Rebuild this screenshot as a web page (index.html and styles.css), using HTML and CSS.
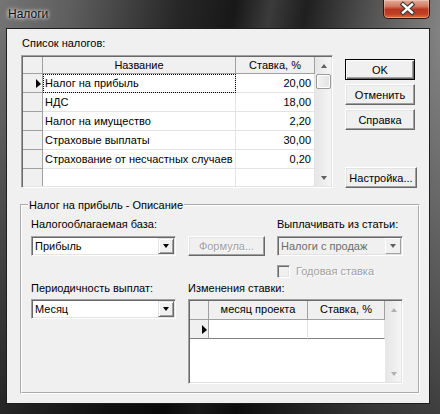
FILE: index.html
```html
<!DOCTYPE html>
<html lang="ru">
<head>
    <meta charset="UTF-8">
    <title>Налоги</title>
    <link rel="stylesheet" href="styles.css">
</head>
<body>

<div class="window">
    <div class="titlebar">
        <span class="title">Налоги</span>
        <div class="close-btn">
            <svg width="47" height="18" viewBox="0 0 47 18">
                <path d="M19 4.5 L28 12.5 M28 4.5 L19 12.5" stroke="#3a3a3a" stroke-width="4.6" stroke-linecap="square"/>
                <path d="M19 4.5 L28 12.5 M28 4.5 L19 12.5" stroke="#ffffff" stroke-width="2.4" stroke-linecap="square"/>
            </svg>
        </div>
    </div>

    <div class="client">
        <div class="top-section">
            <div class="list-col">
                <div class="caption">Список налогов:</div>
                <div class="grid tax-grid">
                    <div class="cells tax-cells">
                        <div class="hd ind"></div>
                        <div class="hd center">Название</div>
                        <div class="hd center">Ставка, %</div>

                        <div class="ind"><span class="ptr"></span></div>
                        <div class="cell focus">Налог на прибыль</div>
                        <div class="cell num">20,00</div>

                        <div class="ind"></div>
                        <div class="cell">НДС</div>
                        <div class="cell num">18,00</div>

                        <div class="ind"></div>
                        <div class="cell">Налог на имущество</div>
                        <div class="cell num">2,20</div>

                        <div class="ind"></div>
                        <div class="cell">Страховые выплаты</div>
                        <div class="cell num">30,00</div>

                        <div class="ind"></div>
                        <div class="cell">Страхование от несчастных случаев</div>
                        <div class="cell num">0,20</div>

                        <div class="ind"></div>
                        <div class="cell"></div>
                        <div class="cell"></div>
                    </div>
                    <div class="vscroll">
                        <div class="sb-arrow"><span class="glyph up"></span></div>
                        <div class="sb-thumb"></div>
                        <div class="sb-track"></div>
                        <div class="sb-arrow"><span class="glyph down"></span></div>
                    </div>
                </div>
            </div>

            <div class="buttons">
                <button class="btn btn-default">OK</button>
                <button class="btn">Отменить</button>
                <button class="btn">Справка</button>
                <button class="btn btn-setup">Настройка...</button>
            </div>
        </div>

        <fieldset class="group">
            <legend>Налог на прибыль - Описание</legend>
            <div class="group-body">
                <div class="lbl">Налогооблагаемая база:</div>
                <div></div>
                <div class="lbl">Выплачивать из статьи:</div>

                <div class="combo">
                    <span class="combo-text">Прибыль</span>
                    <span class="combo-btn"><span class="glyph down dark"></span></span>
                </div>
                <button class="btn btn-formula" disabled>Формула...</button>
                <div class="combo combo-disabled">
                    <span class="combo-text">Налоги с продаж</span>
                    <span class="combo-btn"><span class="glyph down"></span></span>
                </div>

                <div></div>
                <div></div>
                <div class="check">
                    <span class="check-box"></span>
                    <span class="check-text">Годовая ставка</span>
                </div>

                <div class="lbl">Периодичность выплат:</div>
                <div class="lbl span-2">Изменения ставки:</div>

                <div class="combo combo-month">
                    <span class="combo-text">Месяц</span>
                    <span class="combo-btn"><span class="glyph down dark"></span></span>
                </div>
                <div class="grid rate-grid span-2">
                    <div class="cells rate-cells">
                        <div class="hd ind"></div>
                        <div class="hd center">месяц проекта</div>
                        <div class="hd center">Ставка, %</div>

                        <div class="ind last"><span class="ptr"></span></div>
                        <div class="cell last"></div>
                        <div class="cell last"></div>
                    </div>
                    <div class="vscroll">
                        <div class="sb-arrow"><span class="glyph up light"></span></div>
                        <div class="sb-track"></div>
                        <div class="sb-arrow"><span class="glyph down light"></span></div>
                    </div>
                </div>
            </div>
        </fieldset>
    </div>
</div>

</body>
</html>
```

FILE: styles.css
```css
* {
    box-sizing: border-box;
}
html, body {
    margin: 0;
    padding: 0;
}
body {
    width: 440px;
    height: 414px;
    overflow: hidden;
    font-family: "Liberation Sans", Arial, sans-serif;
    font-size: 11px;
    color: #000;
    background: #1c1c1c;
}

/* window frame */
.window {
    width: 440px;
    height: 414px;
    display: flex;
    flex-direction: column;
    background:
        linear-gradient(to bottom, rgba(0,0,0,0) 0, rgba(0,0,0,0) 30px, rgba(0,0,0,0.6) 100%),
        linear-gradient(100deg, #747474 0%, #5e5e5e 14%, #272727 35%, #181818 46%, #3b3b3b 53%, #1f1f1f 60%, #4c4c4c 71%, #848484 87%, #9a9a9a 100%);
}
.titlebar {
    height: 28px;
    flex: none;
    display: flex;
    align-items: flex-start;
}
.title {
    margin: 7px 0 0 8px;
    font-size: 12px;
    line-height: 14px;
    color: #101010;
    text-shadow: 0 0 5px #fff, 0 0 3px rgba(255,255,255,0.9);
}
.close-btn {
    margin-left: auto;
    margin-right: 10px;
    width: 47px;
    height: 19px;
    border: 1px solid #2c1410;
    border-top: none;
    border-radius: 0 0 5px 5px;
    background: linear-gradient(to bottom, #e4ab98 0%, #d27a63 35%, #b9371f 52%, #bf3f24 78%, #de7240 100%);
    box-shadow: inset 0 0 0 1px rgba(255,255,255,0.3);
    overflow: hidden;
}
.close-btn svg {
    display: block;
}

/* dialog client area */
.client {
    flex: none;
    height: 376px;
    margin: 0 10px 0 6px;
    background: #f0f0f0;
    border: 1px solid #1e1e1e;
    padding: 8px 0 0 14px;
}
.top-section {
    display: flex;
}
.list-col {
    width: 312px;
}
.caption {
    line-height: 13px;
    padding-left: 1px;
}

/* sunken grid boxes */
.grid {
    display: flex;
    background: #fff;
    border: 1px solid;
    border-color: #a0a0a0 #fff #fff #a0a0a0;
    box-shadow: inset 1px 1px #696969, inset -1px -1px #e3e3e3;
    padding: 1px;
    overflow: hidden;
}
.tax-grid {
    margin-top: 5px;
    height: 133px;
}
.cells {
    flex: 1;
    display: grid;
    align-content: start;
    overflow: hidden;
}
.tax-cells {
    grid-template-columns: 20px 193px 79px;
    grid-template-rows: 17px;
    grid-auto-rows: 19px;
}
.rate-cells {
    grid-template-columns: 19px 99px 77px;
    grid-auto-rows: 19px;
}
.cells > div {
    border-right: 1px solid #e3e3e3;
    border-bottom: 1px solid #e3e3e3;
    line-height: 18px;
    white-space: nowrap;
    overflow: hidden;
    padding: 0 2px;
}
.cells .hd {
    background: #f0f0f0;
    border-color: #a0a0a0;
    line-height: 16px;
}
.cells .ind {
    background: #f0f0f0;
    border-color: #a0a0a0;
    display: flex;
    align-items: center;
    justify-content: flex-end;
    padding: 0 1px 0 0;
}
.cells .last {
    border-bottom-color: #808080;
}
.cells .center {
    text-align: center;
}
.cells .num {
    text-align: right;
    padding-right: 3px;
}
.cells .focus {
    outline: 1px dotted #000;
    outline-offset: -1px;
}
.ptr {
    width: 0;
    height: 0;
    border-left: 5px solid #000;
    border-top: 5px solid transparent;
    border-bottom: 4px solid transparent;
}

/* themed scrollbar */
.vscroll {
    width: 16px;
    flex: none;
    display: flex;
    flex-direction: column;
    background: linear-gradient(to right, #e6e6e6, #f5f5f5);
    border-left: 1px solid #e8e8e8;
}
.sb-arrow {
    height: 17px;
    display: flex;
    align-items: center;
    justify-content: center;
}
.sb-thumb {
    height: 15px;
    border: 1px solid #9a9a9a;
    border-radius: 2px;
    background: linear-gradient(to right, #f3f3f3, #e2e2e2);
    box-shadow: inset 0 0 0 1px #fff;
}
.sb-track {
    flex: 1;
}
.glyph {
    width: 0;
    height: 0;
    border-left: 3.5px solid transparent;
    border-right: 3.5px solid transparent;
}
.glyph.up {
    border-bottom: 4px solid #606060;
}
.glyph.down {
    border-top: 4px solid #606060;
}
.glyph.up.light {
    border-bottom-color: #b0b0b0;
}
.glyph.down.light {
    border-top-color: #b0b0b0;
}
.glyph.down.dark {
    border-top-color: #000;
}

/* buttons */
.buttons {
    margin-left: 12px;
    padding-top: 22px;
    display: flex;
    flex-direction: column;
    gap: 4px;
}
.btn {
    font: inherit;
    color: #000;
    background: #f0f0f0;
    border: 1px solid;
    border-color: #fff #696969 #696969 #fff;
    box-shadow: inset -1px -1px #a0a0a0, inset 1px 1px #e3e3e3;
    padding: 0;
    width: 70px;
    height: 21px;
}
.btn-default {
    border-color: #000;
    box-shadow: inset 1px 1px #fff, inset -1px -1px #696969, inset -2px -2px #a0a0a0;
}
.btn-setup {
    width: 72px;
    margin-top: 33px;
}
.btn:disabled {
    color: #a0a0a0;
    text-shadow: 1px 1px #fff;
}

/* group box */
.group {
    margin: 10px 9px 0 -1px;
    border: 2px groove #fff;
    padding: 6px 15px 8px 9px;
    min-width: 0;
}
.group legend {
    margin-left: -3px;
    padding: 0 1px;
    line-height: 14px;
}
.group-body {
    display: grid;
    grid-template-columns: 145px 77px 126px;
    grid-template-rows: 18px 20px 26px 17px 85px;
    column-gap: 12px;
}
.lbl {
    line-height: 13px;
}
.span-2 {
    grid-column: span 2;
}
.btn-formula {
    width: 77px;
    height: 20px;
}

/* combo boxes */
.combo {
    height: 20px;
    display: flex;
    background: #fff;
    border: 1px solid;
    border-color: #a0a0a0 #fff #fff #a0a0a0;
    box-shadow: inset 1px 1px #696969, inset -1px -1px #e3e3e3;
    padding: 1px;
}
.combo-text {
    flex: 1;
    padding-left: 2px;
    line-height: 16px;
}
.combo-btn {
    width: 16px;
    display: flex;
    align-items: center;
    justify-content: center;
    background: #f0f0f0;
    border: 1px solid;
    border-color: #e3e3e3 #696969 #696969 #e3e3e3;
    box-shadow: inset 1px 1px #fff, inset -1px -1px #a0a0a0;
}
.combo-disabled {
    background: #f0f0f0;
    color: #6d6d6d;
}
.combo-disabled .combo-btn {
    border-color: #fff #a0a0a0 #a0a0a0 #fff;
    box-shadow: none;
}
.combo-month {
    align-self: start;
}

/* checkbox */
.check {
    display: flex;
    align-items: center;
    gap: 6px;
    margin-top: 9px;
    align-self: start;
    color: #a0a0a0;
    text-shadow: 1px 1px #fff;
}
.check-box {
    width: 13px;
    height: 13px;
    border: 1px solid;
    border-color: #a0a0a0 #fff #fff #a0a0a0;
    box-shadow: inset 1px 1px #696969, inset -1px -1px #e3e3e3;
    background: #f0f0f0;
}
.check-text {
    line-height: 13px;
}
```
